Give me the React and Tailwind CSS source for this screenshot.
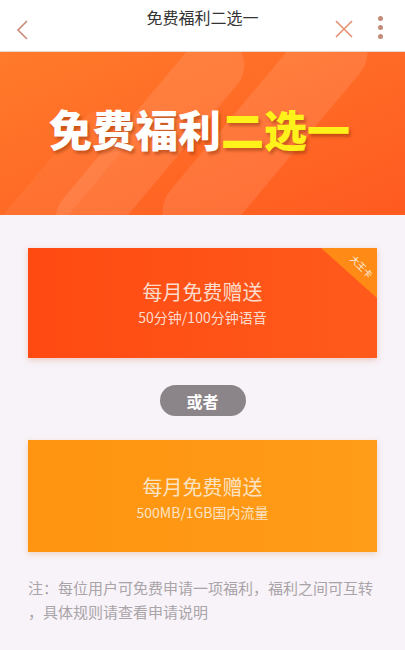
import React from "react";

const font = { fontFamily: '"Noto Sans CJK SC", "Noto Sans", sans-serif' };

function Header() {
  return (
    <div className="relative h-[52px] border-b border-[#e8d8d0] bg-white">
      <div className="absolute left-0 right-0 top-[5px] text-center text-[16px] text-[#333]">免费福利二选一</div>
      <div className="flex h-full items-end justify-between pb-[10px] pl-[14px] pr-[22px]">
        <svg width="18" height="22" viewBox="0 0 18 22" fill="none">
          <path d="M13 2 L4 11 L13 20" stroke="#c98a78" strokeWidth="1.6" />
        </svg>
        <div className="flex items-center gap-[24px]">
          <svg width="20" height="20" viewBox="0 0 20 20" fill="none">
            <path d="M2 2 L18 18 M18 2 L2 18" stroke="#e8906e" strokeWidth="1.6" />
          </svg>
          <div className="flex flex-col gap-[4px] pb-[2px]">
            <span className="h-[5px] w-[5px] rounded-full bg-[#c48a78]" />
            <span className="h-[5px] w-[5px] rounded-full bg-[#c48a78]" />
            <span className="h-[5px] w-[5px] rounded-full bg-[#c48a78]" />
          </div>
        </div>
      </div>
    </div>
  );
}

function Banner() {
  return (
    <div className="relative flex h-[163px] items-center justify-center overflow-hidden bg-gradient-to-br from-[#ff7a2a] via-[#ff6a26] to-[#ff5a20]">
      <div className="absolute left-[120px] top-[-40px] h-[260px] w-[60px] rotate-[40deg] rounded-full bg-white/10" />
      <div className="absolute left-[230px] top-[-60px] h-[280px] w-[70px] rotate-[40deg] rounded-full bg-white/10" />
      <div className="absolute left-[30px] top-[40px] h-[200px] w-[50px] rotate-[40deg] rounded-full bg-white/5" />
      <div className="relative mb-[10px] pr-[6px] text-[43px] font-black leading-none" style={{ textShadow: "2px 3px 3px rgba(120,40,0,0.4)" }}>
        <span className="text-white">免费福利</span>
        <span className="text-[#fff21a]">二选一</span>
      </div>
    </div>
  );
}

export default function App() {
  return (
    <div className="h-[650px] w-[405px] overflow-hidden bg-[#f8f3f8]" style={font}>
      <Header />
      <Banner />
      <div className="px-[28px] pt-[33px]">
        <div className="relative flex h-[110px] flex-col items-center justify-center overflow-hidden bg-gradient-to-r from-[#ff4a12] to-[#ff5a1c] shadow-[0_2px_6px_rgba(200,80,40,0.25)]">
          <div className="absolute right-0 top-0 h-0 w-0 border-l-[56px] border-t-[50px] border-l-transparent border-t-[#ff8a16]" />
          <div className="absolute right-[2px] top-[14px] rotate-[45deg] text-[9px] leading-none text-white/90">大王卡</div>
          <div className="text-[20px] leading-[28px] text-[#fbdccc]">每月免费赠送</div>
          <div className="text-[14px] leading-[22px] text-[#fbdccc]">50分钟/100分钟语音</div>
        </div>
        <div className="flex justify-center pb-[24px] pt-[27px]">
          <div className="flex h-[31px] w-[86px] items-center justify-center rounded-full bg-[#8b8489] text-[16px] font-bold text-white">或者</div>
        </div>
        <div className="flex h-[112px] flex-col items-center justify-center bg-gradient-to-r from-[#ff9410] to-[#ff9c18] shadow-[0_2px_6px_rgba(200,120,40,0.25)]">
          <div className="pt-[4px] text-[20px] leading-[28px] text-[#fbe3c4]">每月免费赠送</div>
          <div className="text-[14px] leading-[22px] text-[#fbe3c4]">500MB/1GB国内流量</div>
        </div>
        <p className="whitespace-nowrap pt-[24px] text-[15px] leading-[24px] text-[#a8a4a8]">
          注：每位用户可免费申请一项福利，福利之间可互转
          <br />
          ，具体规则请查看申请说明
        </p>
      </div>
    </div>
  );
}
